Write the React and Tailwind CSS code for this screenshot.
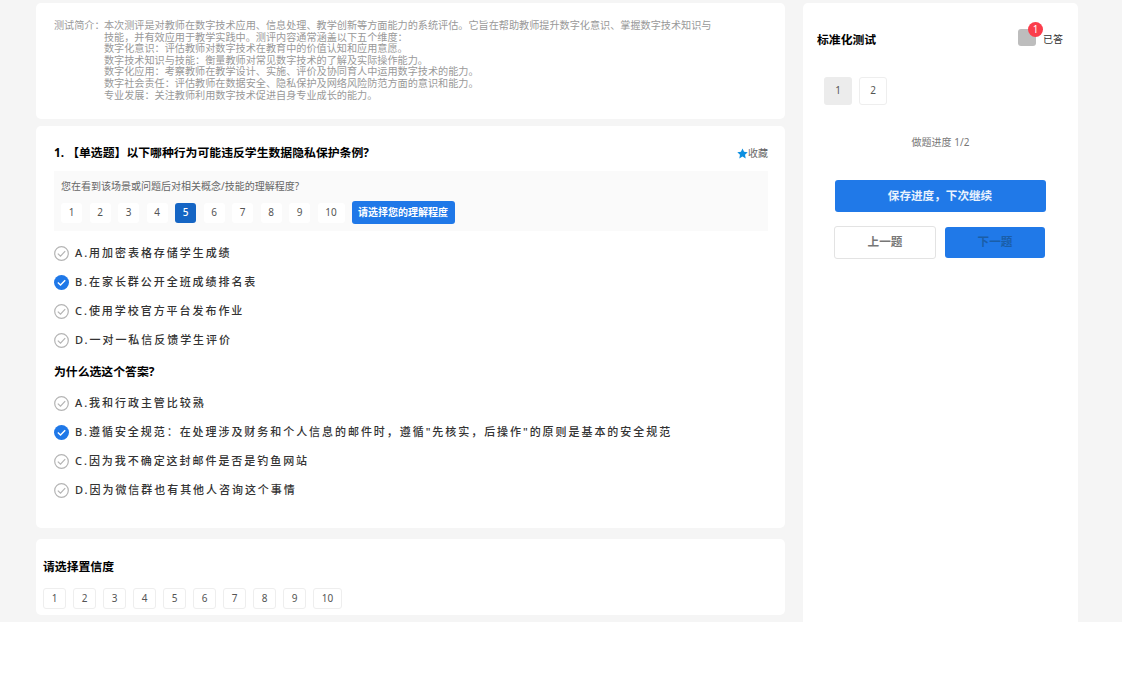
import React from "react";

const FONT = { fontFamily: '"Noto Sans", "Noto Sans CJK SC", sans-serif' };

function Check({ on }) {
  if (on) {
    return (
      <svg width="15" height="15" viewBox="0 0 15 15" className="shrink-0">
        <circle cx="7.5" cy="7.5" r="7.5" fill="#1f78e8" />
        <path d="M3.800 7.600 L6.500 10.100 L11.200 5.200" fill="none" stroke="#fff" strokeWidth="1.4" />
      </svg>
    );
  }
  return (
    <svg width="15" height="15" viewBox="0 0 15 15" className="shrink-0">
      <circle cx="7.5" cy="7.5" r="6.8" fill="#fff" stroke="#b4b4b4" strokeWidth="1.2" />
      <path d="M3.800 7.600 L6.500 10.100 L11.200 5.200" fill="none" stroke="#b4b4b4" strokeWidth="1.200" />
    </svg>
  );
}

function Option({ on, children }) {
  return (
    <div className="flex items-center h-[29px] -ml-[0.5px]">
      <Check on={on} />
      <span className="ml-[6.5px] text-[11px] tracking-[1.95px] text-[#333] font-medium whitespace-nowrap">{children}</span>
    </div>
  );
}

const intro = [
  "数字化意识：评估教师对数字技术在教育中的价值认知和应用意愿。",
  "数字技术知识与技能：衡量教师对常见数字技术的了解及实际操作能力。",
  "数字化应用：考察教师在教学设计、实施、评价及协同育人中运用数字技术的能力。",
  "数字社会责任：评估教师在数据安全、隐私保护及网络风险防范方面的意识和能力。",
  "专业发展：关注教师利用数字技术促进自身专业成长的能力。",
];

export default function App() {
  return (
    <div className="w-[1122px] h-[693px] bg-white overflow-hidden" style={FONT}>
      <div className="h-[622px] bg-[#f5f5f5] flex pl-[36px] pr-[44px]">
        <div className="w-[749px] pt-[3px] shrink-0">
          <section className="h-[116px] bg-white rounded-[5px] pl-[18px] pt-[17px] text-[10.13px] leading-[11.6px] text-[#999]">
            <div className="flex">
              <span className="w-[50px] shrink-0 whitespace-nowrap">测试简介：</span>
              <div className="w-[610px]">
                <p>本次测评是对教师在数字技术应用、信息处理、教学创新等方面能力的系统评估。它旨在帮助教师提升数字化意识、掌握数字技术知识与技能，并有效应用于教学实践中。测评内容通常涵盖以下五个维度：</p>
                {intro.map((t) => (
                  <p key={t}>{t}</p>
                ))}
              </div>
            </div>
          </section>

          <section className="mt-[7px] h-[402px] bg-white rounded-[5px] pl-[18px] pr-[17px] pt-[18px]">
            <div className="flex items-center justify-between h-[17px]">
              <h2 className="text-[11.85px] font-bold text-black">1. 【单选题】以下哪种行为可能违反学生数据隐私保护条例?</h2>
              <div className="flex items-center text-[10px] text-[#666] pt-[1px]">
                <svg width="11" height="11" viewBox="0 0 24 24" fill="#0d8fe0">
                  <path d="M12 1l3.400 7.300 7.900 1-5.800 5.500 1.500 7.900L12 18.800 5 22.700l1.500-7.900L.7 9.300l7.900-1z" />
                </svg>
                <span>收藏</span>
              </div>
            </div>
            <div className="mt-[10px] h-[60px] bg-[#fafafa] pl-[7px] pt-[8px]">
              <p className="text-[10px] leading-[15px] text-[#666]">您在看到该场景或问题后对相关概念/技能的理解程度?</p>
              <div className="mt-[7px] flex items-center">
                <div className="flex gap-[7.5px]">
                  {[1, 2, 3, 4, 5, 6, 7, 8, 9].map((n) => (
                    <span
                      key={n}
                      className={
                        n === 5
                          ? "w-[21px] h-[20px] flex items-center justify-center rounded-[3px] bg-[#1565c4] text-white text-[10px] font-medium"
                          : "w-[21px] h-[20px] flex items-center justify-center rounded-[3px] bg-white text-[#555] text-[10px]"
                      }
                    >
                      {n}
                    </span>
                  ))}
                  <span className="w-[27px] h-[20px] flex items-center justify-center rounded-[3px] bg-white text-[#555] text-[10px]">10</span>
                </div>
                <span className="ml-[7px] h-[23px] w-[103px] flex items-center justify-center rounded-[3px] bg-[#1f78e8] text-white text-[10px] font-bold">请选择您的理解程度</span>
              </div>
            </div>
            <div className="mt-[8px]">
              <Option>A.用加密表格存储学生成绩</Option>
              <Option on>B.在家长群公开全班成绩排名表</Option>
              <Option>C.使用学校官方平台发布作业</Option>
              <Option>D.一对一私信反馈学生评价</Option>
            </div>
            <h3 className="mt-[8px] h-[17px] text-[11.85px] leading-[17px] font-bold text-black">为什么选这个答案?</h3>
            <div className="mt-[9px]">
              <Option>A.我和行政主管比较熟</Option>
              <Option on>B.遵循安全规范：在处理涉及财务和个人信息的邮件时，遵循"先核实，后操作"的原则是基本的安全规范</Option>
              <Option>C.因为我不确定这封邮件是否是钓鱼网站</Option>
              <Option>D.因为微信群也有其他人咨询这个事情</Option>
            </div>
          </section>

          <section className="mt-[11px] h-[76px] bg-white rounded-[5px] pl-[7px] pt-[19px]">
            <h3 className="text-[11.85px] leading-[17px] font-bold text-black">请选择置信度</h3>
            <div className="mt-[13px] flex gap-[7px]">
              {[1, 2, 3, 4, 5, 6, 7, 8, 9].map((n) => (
                <span key={n} className="w-[23px] h-[21px] flex items-center justify-center rounded-[3px] border border-[#eeeeee] text-[#555] text-[10px]">
                  {n}
                </span>
              ))}
              <span className="w-[29px] h-[21px] flex items-center justify-center rounded-[3px] border border-[#eeeeee] text-[#555] text-[10px]">10</span>
            </div>
          </section>
        </div>

        <aside className="ml-[18px] w-[275px] mt-[3px] bg-white rounded-t-[5px] shrink-0">
          <div className="pt-[26px] pl-[14px] pr-[15px] flex items-center justify-between">
            <h2 className="text-[11.85px] font-bold text-black leading-[18px]">标准化测试</h2>
            <div className="flex items-center">
              <span className="relative w-[18px] h-[17px] mb-[3px] rounded-[3px] bg-[#bdbdbd]">
                <span className="absolute -top-[7px] left-[10px] w-[15px] h-[15px] rounded-full bg-[#fb3d4b] text-white text-[10px] flex items-center justify-center">1</span>
              </span>
              <span className="ml-[7px] text-[10px] text-[#333]">已答</span>
            </div>
          </div>
          <div className="mt-[28px] pl-[21px] flex gap-[7px]">
            <span className="w-[28px] h-[27.5px] flex items-center justify-center rounded-[3px] bg-[#ececec] text-[#555] text-[10px]">1</span>
            <span className="w-[28px] h-[27.5px] flex items-center justify-center rounded-[3px] border border-[#eeeeee] text-[#555] text-[10px]">2</span>
          </div>
          <p className="mt-[30px] text-center text-[10px] leading-[15px] text-[#777]">做题进度 1/2</p>
          <button className="mt-[30px] ml-[31.5px] block w-[211px] h-[32px] rounded-[3px] bg-[#2079e8] text-white/90 text-[11.6px] font-bold">保存进度，下次继续</button>
          <div className="mt-[14px] ml-[31px] flex gap-[9px]">
            <button className="w-[102px] h-[33px] rounded-[3px] border border-[#e3e3e3] bg-white text-[#777] text-[11.6px] font-semibold">上一题</button>
            <button className="w-[100px] h-[31px] mt-[1px] rounded-[3px] bg-[#2079e8] text-[#1a5ea8] text-[11.6px] font-semibold">下一题</button>
          </div>
        </aside>
      </div>
    </div>
  );
}
